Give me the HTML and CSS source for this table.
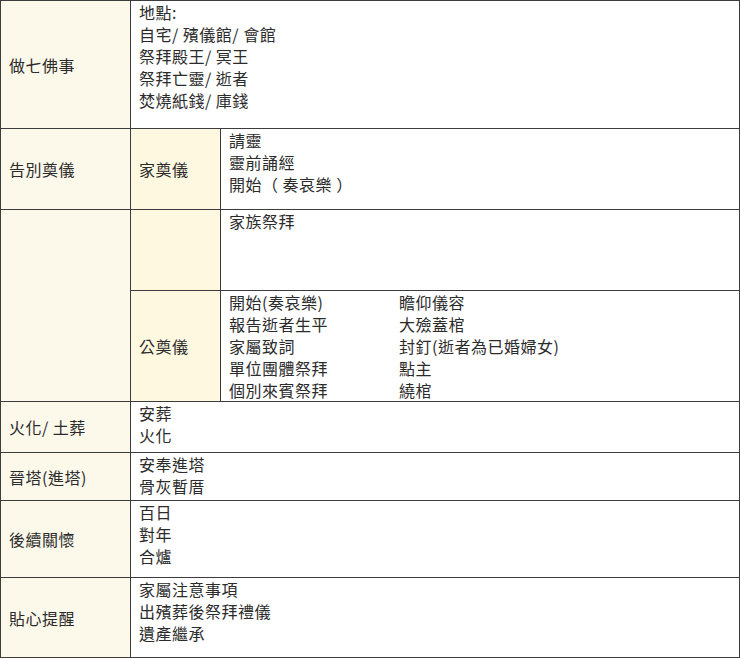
FILE: index.html
```html
<!DOCTYPE html>
<html lang="zh-Hant">
<head>
<meta charset="utf-8">
<link rel="stylesheet" href="styles.css">
</head>
<body>
<table class="t">
<colgroup><col class="w1"><col class="w2"><col class="w3"></colgroup>
<tr class="r1"><td class="lab">做七佛事</td><td colspan="2" class="c">地點:<br>自宅/ 殯儀館/ 會館<br>祭拜殿王/ 冥王<br>祭拜亡靈/ 逝者<br>焚燒紙錢/ 庫錢</td></tr>
<tr class="r2"><td class="lab">告別奠儀</td><td class="sub">家奠儀</td><td class="c">請靈<br>靈前誦經<br>開始（ 奏哀樂 ）</td></tr>
<tr class="r3"><td class="lab" rowspan="2"></td><td class="sub"></td><td class="c">家族祭拜</td></tr>
<tr class="r4"><td class="sub">公奠儀</td><td class="c"><div class="two"><div>開始(奏哀樂)<br>報告逝者生平<br>家屬致詞<br>單位團體祭拜<br>個別來賓祭拜</div><div>瞻仰儀容<br>大殮蓋棺<br>封釘(逝者為已婚婦女)<br>點主<br>繞棺</div></div></td></tr>
<tr class="r5"><td class="lab">火化/ 土葬</td><td colspan="2" class="c">安葬<br>火化</td></tr>
<tr class="r6"><td class="lab">晉塔(進塔)</td><td colspan="2" class="c">安奉進塔<br>骨灰暫厝</td></tr>
<tr class="r7"><td class="lab">後續關懷</td><td colspan="2" class="c">百日<br>對年<br>合爐</td></tr>
<tr class="r8"><td class="lab">貼心提醒</td><td colspan="2" class="c">家屬注意事項<br>出殯葬後祭拜禮儀<br>遺產繼承</td></tr>
</table>
</body>
</html>
```
FILE: styles.css
```css
html, body { margin: 0; padding: 0; background: #fff; }
body {
  font-family: "Noto Sans CJK TC", "Liberation Sans", sans-serif;
  font-size: 16px;
  line-height: 22px;
  letter-spacing: 0.5px;
  color: #2b2b2b;
}
.t {
  border-collapse: collapse;
  table-layout: fixed;
  width: 740px;
}
.w1 { width: 130px; }
.w2 { width: 90px; }
.t td {
  border: 1px solid #3c3c3c;
  padding: 0 8px;
}
.lab {
  background: #fcf8ea;
  vertical-align: middle;
}
.sub {
  background: #fff8e1;
  vertical-align: middle;
}
.c {
  vertical-align: top;
  background: #fff;
}
.r1 td { height: 127px; }
.r2 td { height: 80px; }
.r3 td { height: 80px; }
.r4 td { height: 110px; }
.r5 td { height: 50px; }
.r6 td { height: 47px; }
.r7 td { height: 76px; }
.r8 td { height: 79px; }
.two {
  display: grid;
  grid-template-columns: 170px 1fr;
}
```
